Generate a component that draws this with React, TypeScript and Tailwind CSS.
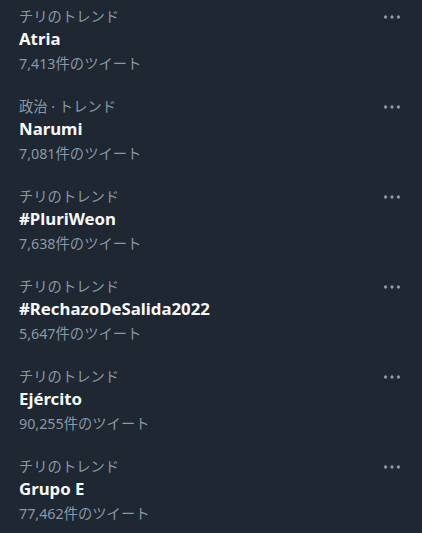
const trends = [
  { category: 'チリのトレンド', title: 'Atria', count: '7,413件のツイート' },
  { category: '政治 · トレンド', title: 'Narumi', count: '7,081件のツイート' },
  { category: 'チリのトレンド', title: '#PluriWeon', count: '7,638件のツイート' },
  { category: 'チリのトレンド', title: '#RechazoDeSalida2022', count: '5,647件のツイート' },
  { category: 'チリのトレンド', title: 'Ejército', count: '90,255件のツイート' },
  { category: 'チリのトレンド', title: 'Grupo E', count: '77,462件のツイート' },
];

const font = "font-['Segoe_UI','Noto_Sans','Noto_Sans_CJK_JP',sans-serif]";

export default function App() {
  return (
    <div className={`w-[422px] h-[533px] overflow-hidden bg-[#1e2732] ${font}`}>
      <div className="-mt-[5px]">
        {trends.map((t, i) => (
          <div key={i} className="flex items-start justify-between pl-[19px] pr-[19px] pt-[13px] h-[90px]">
            <div className="flex flex-col">
              <div className="text-[14.3px] leading-[18px] text-[#8b98a5]">{t.category}</div>
              <div className="mt-[2px] text-[16.8px] leading-[22px] font-bold text-[#f7f9f9]">{t.title}</div>
              <div className="mt-[5px] text-[14.3px] leading-[18px] text-[#8b98a5]">{t.count}</div>
            </div>
            <svg viewBox="0 0 24 24" className="w-[22px] h-[22px] mt-[-2px] fill-[#8b98a5]">
              <circle cx="5" cy="12" r="1.8" />
              <circle cx="12" cy="12" r="1.8" />
              <circle cx="19" cy="12" r="1.8" />
            </svg>
          </div>
        ))}
      </div>
    </div>
  );
}
